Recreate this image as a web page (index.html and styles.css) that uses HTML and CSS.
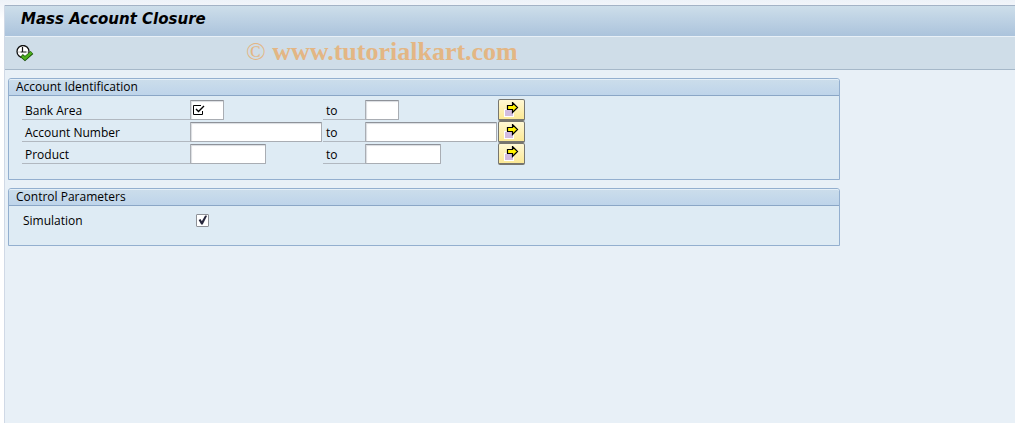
FILE: index.html
```
<!DOCTYPE html>
<html lang="en">
<head>
    <meta charset="UTF-8">
    <meta name="viewport" content="width=device-width, initial-scale=1.0">
    <title>Mass Account Closure</title>
    <link rel="stylesheet" href="styles.css">
</head>
<body>
    <div class="window">
        <header class="title-bar">
            <h1>Mass Account Closure</h1>
        </header>

        <div class="toolbar">
            <button type="button" class="execute-btn" aria-label="Execute">
                <svg width="18" height="17" viewBox="0 0 18 17">
                    <circle cx="7" cy="6.500" r="6" fill="#fff" stroke="#111" stroke-width="1.300"/>
                    <path d="M6.500 2v5.500M4.500 7h6" stroke="#111" stroke-width="1.200" fill="none"/>
                    <path d="M2.500 7h1M11.500 7h1M6.500 10v1" stroke="#777"/>
                    <path d="M5.500 10.500l3.500 3 7-6" fill="none" stroke="#174d08" stroke-width="4"/>
                    <path d="M6 11l3 2.500 6.500-6" fill="none" stroke="#4caf1c" stroke-width="2.500"/>
                </svg>
            </button>
            <span class="watermark"><span class="copy">©</span> www.tutorialkart.com</span>
        </div>

        <main class="content">
            <section class="group">
                <h2>Account Identification</h2>
                <div class="group-body">
                    <div class="range-row">
                        <label class="field-label" for="bankFrom">Bank Area</label>
                        <div class="field">
                            <input type="text" id="bankFrom" class="size-small" required>
                            <svg class="required-mark" width="12" height="11" viewBox="0 0 12 11">
                                <path d="M8 .5H.5v9h9V6" fill="none" stroke="#000"/>
                                <path d="M3 4l2.500 2.500L11 1" fill="none" stroke="#000" stroke-width="1.400"/>
                            </svg>
                        </div>
                        <label class="to-label" for="bankTo">to</label>
                        <div class="field"><input type="text" id="bankTo" class="size-small"></div>
                        <button type="button" class="multi-btn" aria-label="Multiple selection for Bank Area">
                            <svg width="15" height="15" viewBox="0 0 15 15">
                                <path d="M0 7h10v8H0z" fill="#fff"/>
                                <path d="M1 8h8v6H1z" fill="#d2bce0"/>
                                <path d="M3.500 3.500h5v-3l5 5-5 5v-3h-5z" fill="#fff200" stroke="#000" stroke-width="1.200"/>
                            </svg>
                        </button>
                    </div>
                    <div class="range-row">
                        <label class="field-label" for="accountFrom">Account Number</label>
                        <div class="field"><input type="text" id="accountFrom" class="size-large"></div>
                        <label class="to-label" for="accountTo">to</label>
                        <div class="field"><input type="text" id="accountTo" class="size-large"></div>
                        <button type="button" class="multi-btn" aria-label="Multiple selection for Account Number">
                            <svg width="15" height="15" viewBox="0 0 15 15">
                                <path d="M0 7h10v8H0z" fill="#fff"/>
                                <path d="M1 8h8v6H1z" fill="#d2bce0"/>
                                <path d="M3.500 3.500h5v-3l5 5-5 5v-3h-5z" fill="#fff200" stroke="#000" stroke-width="1.200"/>
                            </svg>
                        </button>
                    </div>
                    <div class="range-row">
                        <label class="field-label" for="productFrom">Product</label>
                        <div class="field"><input type="text" id="productFrom" class="size-medium"></div>
                        <label class="to-label" for="productTo">to</label>
                        <div class="field"><input type="text" id="productTo" class="size-medium"></div>
                        <button type="button" class="multi-btn" aria-label="Multiple selection for Product">
                            <svg width="15" height="15" viewBox="0 0 15 15">
                                <path d="M0 7h10v8H0z" fill="#fff"/>
                                <path d="M1 8h8v6H1z" fill="#d2bce0"/>
                                <path d="M3.500 3.500h5v-3l5 5-5 5v-3h-5z" fill="#fff200" stroke="#000" stroke-width="1.200"/>
                            </svg>
                        </button>
                    </div>
                </div>
            </section>

            <section class="group">
                <h2>Control Parameters</h2>
                <div class="group-body">
                    <div class="check-row">
                        <label for="simulation">Simulation</label>
                        <input type="checkbox" id="simulation" checked>
                    </div>
                </div>
            </section>
        </main>
    </div>
</body>
</html>
```
FILE: styles.css
```
* {
    margin: 0;
    padding: 0;
    box-sizing: border-box;
}

body {
    font-family: "Open Sans", sans-serif;
    font-size: 12px;
    color: #000;
    background: linear-gradient(#edf2f8, #fff 20px);
    padding: 5px 0 0 4px;
}

.window {
    min-height: calc(100vh - 5px);
    background: #e8f0f7;
    border-left: 1px solid #d0d9e6;
}

.title-bar {
    height: 32px;
    padding: 0 16px;
    background: linear-gradient(#cddeea, #abc3dc);
    border-top: 1px solid #a3b3c6;
    border-bottom: 1px solid #e8f0f7;
}

.title-bar h1 {
    font-family: "DejaVu Sans", sans-serif;
    font-size: 15px;
    font-weight: bold;
    font-style: italic;
    line-height: 27px;
}

.toolbar {
    display: flex;
    align-items: center;
    height: 33px;
    padding: 0 11px;
    background: #cfdde8;
    border-bottom: 1px solid #a6b8c9;
}

.execute-btn {
    width: 18px;
    height: 20px;
    border: none;
    background: none;
    cursor: pointer;
}

.execute-btn svg,
.multi-btn svg {
    display: block;
}

.watermark {
    margin-left: 212px;
    padding-bottom: 2px;
    font-family: "Liberation Serif", serif;
    font-size: 26px;
    font-weight: bold;
    line-height: 30px;
    color: #e3b684;
}

.watermark .copy {
    font-weight: normal;
}

.content {
    padding: 8px 3px;
}

.group {
    max-width: 832px;
    margin-bottom: 8px;
    background: #deebf4;
    border: 1px solid #93afcf;
    border-radius: 3px 3px 0 0;
}

.group h2 {
    height: 17px;
    padding: 0 7px;
    font-size: 12px;
    font-weight: normal;
    line-height: 14px;
    background: linear-gradient(#cbddeb, #bed4ea);
    border-top: 1px solid #e4eff8;
    border-bottom: 1px solid #8aa6c6;
    border-radius: 2px 2px 0 0;
}

.group-body {
    padding: 3px 13px 14px;
}

.range-row {
    display: grid;
    grid-template-columns: 168px 133px 42px 133px 27px;
    height: 22px;
}

.field-label,
.to-label {
    height: 21px;
    padding: 0 3px;
    line-height: 24px;
    border-bottom: 1px solid #b1b8c0;
}

.field {
    position: relative;
    padding-top: 1px;
}

.field input {
    display: block;
    height: 20px;
    padding: 0 3px;
    font: inherit;
    background: #fff;
    border: 1px solid #a9adb3;
    border-top-color: #8e9299;
    border-radius: 1px;
    box-shadow: inset 1px 1px 1px #d9dce0;
}

.field .size-small {
    width: 34px;
}

.field .size-medium {
    width: 76px;
}

.field .size-large {
    width: 132px;
}

/* sits over the empty mandatory field */
.required-mark {
    position: absolute;
    top: 6px;
    left: 3px;
}

.multi-btn {
    height: 22px;
    padding: 2px 5px;
    background: linear-gradient(#fff8d4, #fce995);
    border: 1px solid #77766f;
    border-bottom-width: 2px;
    border-radius: 2px;
    cursor: pointer;
}

.check-row {
    display: flex;
    align-items: center;
    height: 22px;
    padding: 0 1px;
}

.check-row label {
    width: 173px;
}

.check-row input {
    appearance: none;
    width: 13px;
    height: 13px;
    background: #fff;
    border: 1px solid #8e9197;
    border-radius: 1px;
}

.check-row input:checked::before {
    content: "";
    display: block;
    height: 11px;
    background: #27273c;
    clip-path: polygon(15% 50%, 32% 42%, 44% 62%, 74% 10%, 92% 12%, 52% 92%, 38% 92%);
}
```
